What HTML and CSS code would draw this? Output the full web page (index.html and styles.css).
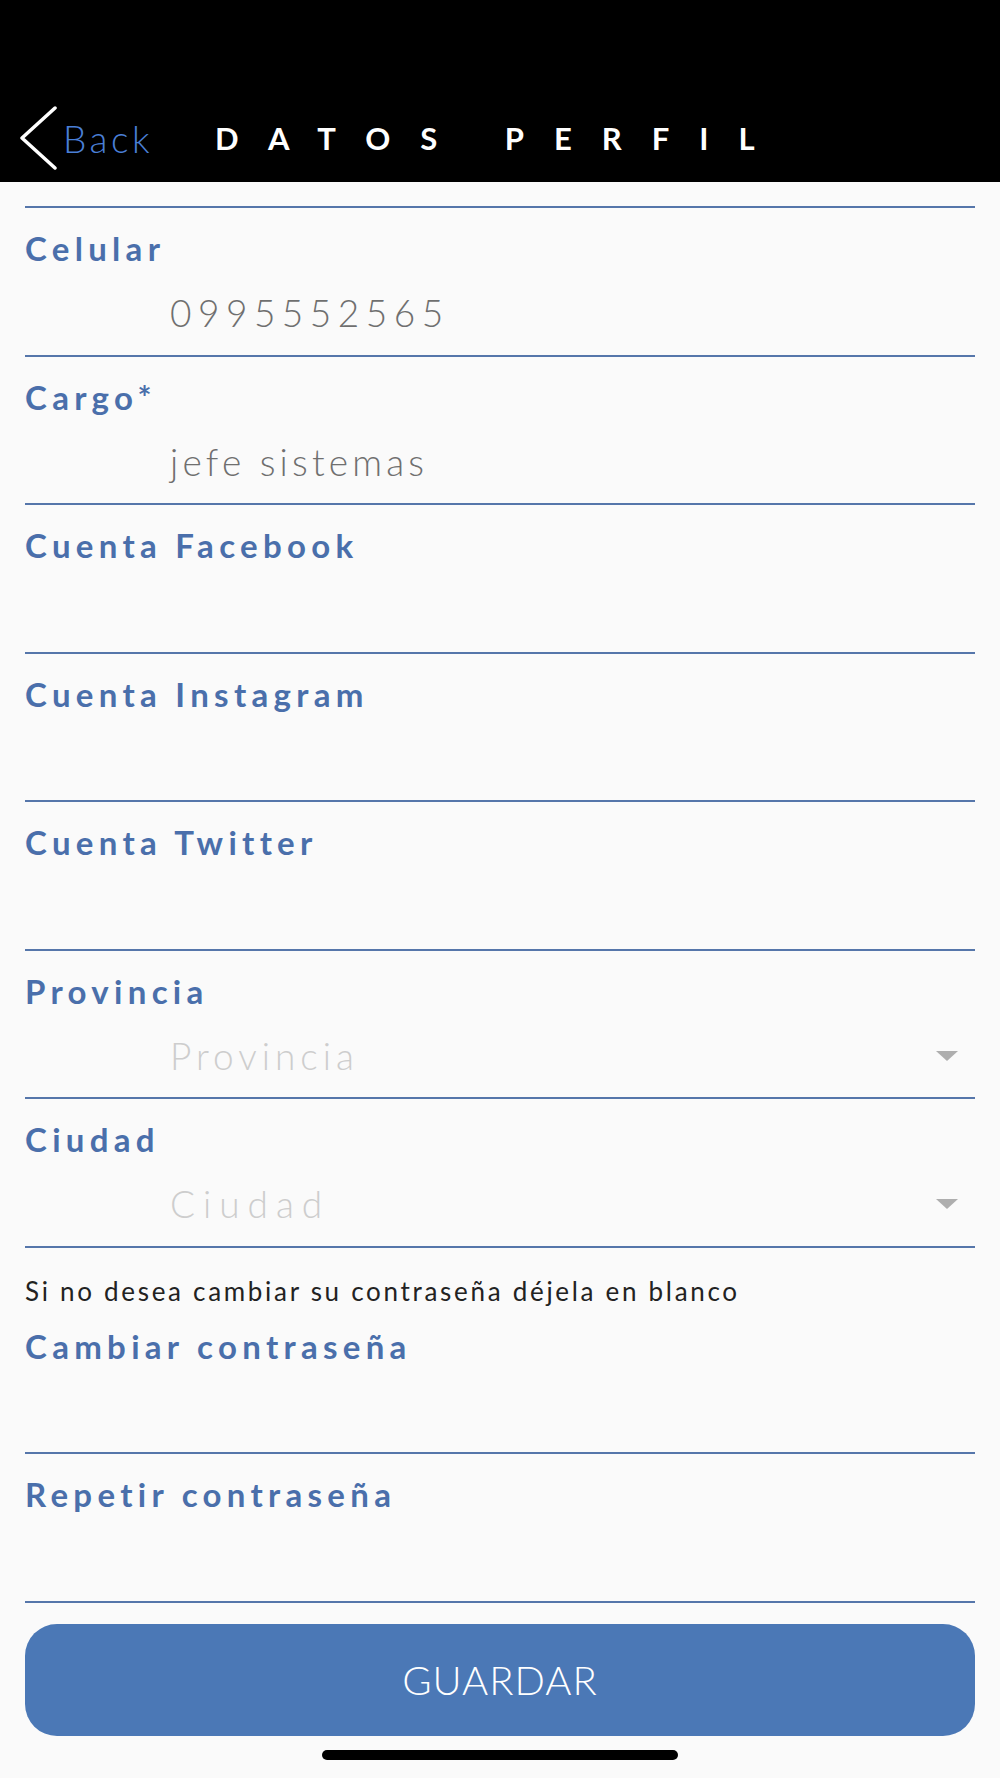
FILE: index.html
```html
<!DOCTYPE html>
<html lang="es">
<head>
<meta charset="utf-8">
<title>Datos Perfil</title>
<link rel="stylesheet" href="styles.css">
</head>
<body>
<header class="header">
  <a class="back">
    <svg class="chevron" width="40" height="64" viewBox="0 0 40 64"><polyline points="37,2 4,32 37,62" fill="none" stroke="#fff" stroke-width="3.5" stroke-linecap="round" stroke-linejoin="round"/></svg>
    <span class="back-text">Back</span>
  </a>
  <h1 class="title">DATOS PERFIL</h1>
</header>
<main class="form">
  <div class="field">
    <div class="label">Celular</div>
    <div class="value phone">0995552565</div>
  </div>
  <div class="field">
    <div class="label">Cargo*</div>
    <div class="value">jefe sistemas</div>
  </div>
  <div class="field">
    <div class="label">Cuenta Facebook</div>
  </div>
  <div class="field">
    <div class="label">Cuenta Instagram</div>
  </div>
  <div class="field">
    <div class="label">Cuenta Twitter</div>
  </div>
  <div class="field">
    <div class="label">Provincia</div>
    <div class="value select"><span class="placeholder">Provincia</span><span class="caret"></span></div>
  </div>
  <div class="field">
    <div class="label">Ciudad</div>
    <div class="value select"><span class="placeholder wide">Ciudad</span><span class="caret"></span></div>
  </div>
  <p class="note">Si no desea cambiar su contraseña déjela en blanco</p>
  <div class="field">
    <div class="label">Cambiar contraseña</div>
  </div>
  <div class="field">
    <div class="label">Repetir contraseña</div>
  </div>
  <button class="save">GUARDAR</button>
  <div class="home-indicator"></div>
</main>
</body>
</html>
```
FILE: styles.css
```css
html, body {
  margin: 0;
  padding: 0;
  background: #fafafa;
  font-family: "Lato", "Liberation Sans", sans-serif;
}

.header {
  height: 182px;
  box-sizing: border-box;
  background: #000;
  padding: 94px 0 0 18px;
  display: flex;
  align-items: center;
}

.back {
  display: flex;
  align-items: center;
  gap: 5px;
}

.chevron {
  display: block;
}

.back-text {
  color: #4a7fd6;
  font-weight: 300;
  font-size: 37px;
  letter-spacing: 3.5px;
  line-height: 44px;
  padding-top: 2px;
}

.title {
  margin: 0 0 0 62px;
  color: #fff;
  font-weight: 700;
  font-size: 31px;
  letter-spacing: 30px;
  word-spacing: 0;
  line-height: 44px;
}

.form {
  padding: 24px 25px 0;
}

.field {
  height: 148.5px;
  box-sizing: border-box;
  border-bottom: 2px solid #5576aa;
  padding-top: 22px;
}

.field:first-child {
  border-top: 2px solid #5576aa;
  height: 150.5px;
}

.label {
  color: #4a6fab;
  font-weight: 700;
  font-size: 33px;
  letter-spacing: 5.3px;
  line-height: 36px;
}

.value {
  margin-top: 25px;
  padding-left: 145px;
  color: #6f6f6f;
  font-weight: 300;
  font-size: 37px;
  letter-spacing: 4.2px;
  line-height: 44px;
}

.phone {
  letter-spacing: 6.5px;
}

.select {
  display: flex;
  justify-content: space-between;
  align-items: center;
  padding-right: 17px;
  letter-spacing: 5px;
}

.placeholder {
  color: #cdcdcd;
}

.placeholder.wide {
  letter-spacing: 8px;
}

.caret {
  width: 0;
  height: 0;
  border-left: 11.5px solid transparent;
  border-right: 11.5px solid transparent;
  border-top: 10px solid #aeaeae;
}

.note {
  margin: 0;
  padding-top: 28px;
  height: 58px;
  box-sizing: border-box;
  color: #222;
  font-weight: 400;
  font-size: 26px;
  letter-spacing: 2.7px;
  line-height: 30px;
}

.save {
  display: block;
  width: 100%;
  height: 112px;
  margin-top: 21px;
  border: none;
  border-radius: 32px;
  background: #4b78b6;
  color: #fff;
  font-family: "Lato", "Liberation Sans", sans-serif;
  font-weight: 300;
  font-size: 40px;
  letter-spacing: 1px;
}

.home-indicator {
  width: 356px;
  height: 10px;
  margin: 14px auto 0;
  border-radius: 5px;
  background: #000;
}
```
